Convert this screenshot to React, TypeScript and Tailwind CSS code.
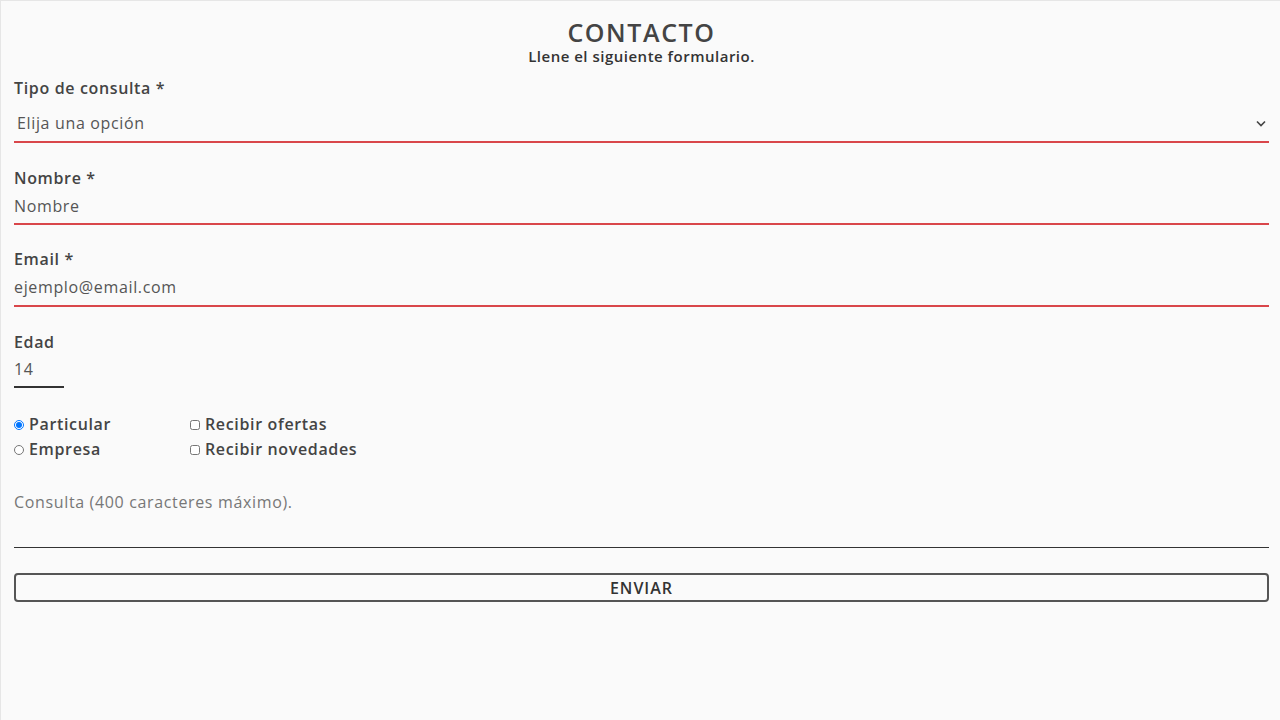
import { useState } from "react";

export default function App() {
  const [tipo, setTipo] = useState("");
  const [persona, setPersona] = useState("particular");

  return (
    <div
      className="min-h-screen bg-[#fafafa] text-[#444] border-l border-t border-[#e6e6e6] pl-[13px] pr-[11px] pt-[17px] tracking-[0.65px]"
      style={{ fontFamily: '"Open Sans", "Liberation Sans", sans-serif' }}
    >
      {/* ENCABEZADO */}
      <div className="flex flex-col items-center">
        <h1 className="text-[25px] leading-[29px] font-semibold text-[#444] tracking-[1.6px]">CONTACTO</h1>
        <p className="text-[15px] leading-[18px] font-semibold text-[#333] tracking-[0.5px]">
          Llene el siguiente formulario.
        </p>
      </div>

      <form className="flex flex-col" onSubmit={(e) => e.preventDefault()}>
        {/* TIPO DE CONSULTA */}
        <label className="mt-[13px] text-[16px] leading-[20px] font-semibold">Tipo de consulta *</label>
        <div className="relative mt-[7px]">
          <select
            value={tipo}
            onChange={(e) => setTipo(e.target.value)}
            className="w-full h-[38px] appearance-none bg-transparent border-b-2 border-[#d9464a] pl-[3px] text-[16px] text-[#555] tracking-[0.65px] outline-none"
          >
            <option value="">Elija una opción</option>
            <option value="ventas">Ventas</option>
            <option value="soporte">Soporte</option>
          </select>
          <svg
            className="absolute right-[3px] top-[15px] pointer-events-none"
            width="10"
            height="7"
            viewBox="0 0 10 7"
            fill="none"
            stroke="#444"
            strokeWidth="1.6"
          >
            <path d="M1 1.5 L5 5.5 L9 1.5" />
          </svg>
        </div>

        {/* NOMBRE */}
        <label className="mt-[25px] text-[16px] leading-[20px] font-semibold">Nombre *</label>
        <input
          type="text"
          placeholder="Nombre"
          className="w-full h-[37px] bg-transparent border-b-2 border-[#d9464a] text-[16px] text-[#555] tracking-[0.65px] placeholder:text-[#555] outline-none"
        />

        {/* EMAIL */}
        <label className="mt-[24px] text-[16px] leading-[20px] font-semibold">Email *</label>
        <input
          type="email"
          placeholder="ejemplo@email.com"
          className="w-full h-[38px] bg-transparent border-b-2 border-[#d9464a] text-[16px] text-[#555] tracking-[0.65px] placeholder:text-[#555] outline-none"
        />

        {/* EDAD */}
        <label className="mt-[25px] text-[16px] leading-[20px] font-semibold">Edad</label>
        <input
          type="number"
          defaultValue={14}
          className="w-[50px] h-[36px] bg-transparent border-b-2 border-[#333] text-[16px] text-[#555] tracking-[0.65px] outline-none [appearance:textfield] [&::-webkit-inner-spin-button]:appearance-none"
        />

        {/* OPCIONES */}
        <div className="mt-[24px] grid grid-cols-[176px_1fr] text-[16px] leading-[25px] font-semibold">
          <label className="flex items-center gap-[5px]">
            <input
              type="radio"
              name="persona"
              checked={persona === "particular"}
              onChange={() => setPersona("particular")}
              className="m-0 w-[10px] h-[10px]"
            />
            Particular
          </label>
          <label className="flex items-center gap-[5px]">
            <input type="checkbox" className="m-0 w-[10px] h-[10px]" />
            Recibir ofertas
          </label>
          <label className="flex items-center gap-[5px]">
            <input
              type="radio"
              name="persona"
              checked={persona === "empresa"}
              onChange={() => setPersona("empresa")}
              className="m-0 w-[10px] h-[10px]"
            />
            Empresa
          </label>
          <label className="flex items-center gap-[5px]">
            <input type="checkbox" className="m-0 w-[10px] h-[10px]" />
            Recibir novedades
          </label>
        </div>

        {/* CONSULTA */}
        <textarea
          placeholder="Consulta (400 caracteres máximo)."
          maxLength={400}
          className="mt-[29px] w-full h-[57px] resize-none bg-transparent border-b-[1.5px] border-[#333] text-[16px] leading-[22px] text-[#555] tracking-[0.65px] placeholder:text-[#777] outline-none"
        />

        {/* ENVIAR */}
        <button
          type="submit"
          className="mt-[25px] w-full h-[29px] border-2 border-[#555] rounded-[4px] text-[16px] leading-[20px] font-semibold text-[#333] tracking-[1px]"
        >
          ENVIAR
        </button>
      </form>
    </div>
  );
}
